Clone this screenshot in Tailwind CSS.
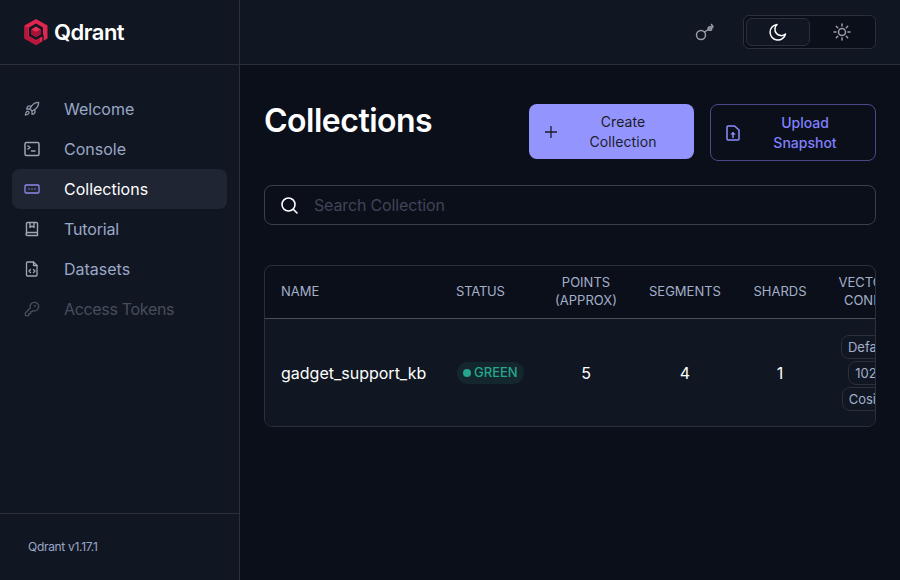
<!DOCTYPE html>
<html lang="en">

<head>
  <script src="https://cdn.jsdelivr.net/npm/@tailwindcss/browser@4"></script>
  <meta charset="UTF-8">
  <title>Qdrant Collections</title>
</head>

<body class="bg-[#0b0f1a] h-[580px] w-[900px] overflow-hidden font-['Inter',sans-serif]">
  <div class="flex h-full">
    <!-- Sidebar -->
    <div class="w-[240px] flex-shrink-0 flex flex-col bg-[#111722] border-r border-[#2a2f3a]">
      <div class="h-[65px] flex-shrink-0 flex items-center pl-6 gap-[6px] border-b border-[#2a2f3a]">
        <svg width="24" height="26" viewBox="0 0 24 26">
          <path d="M12 0 L23.500 6.500 V19.500 L12 26 L0.500 19.500 V6.500 Z" fill="#e0254f" />
          <path d="M0.500 19.500 V6.500 L4.500 9 V17 L12 21.500 L16 19.500 V24 L12 26 Z" fill="#b9163d" />
          <path d="M12 4.500 L19 8.500 V17 L12 21 L5 17 V8.500 Z" fill="#111722" />
          <path d="M19 16 V23.500" stroke="#111722" stroke-width="1.300" />
          <path d="M12 7.500 L16.500 10.200 V15.500 L12 18 L7.500 15.500 V10.200 Z" fill="#ea2d57" />
          <path d="M12 12.800 L16.500 10.200 V15.500 L12 18 L7.500 15.500 V10.200 Z" fill="#a81238" />
        </svg>
        <span class="text-white text-[22px] font-semibold tracking-[-0.5px]">Qdrant</span>
      </div>

      <nav class="flex-1 px-3 pt-6 flex flex-col">
        <a class="h-10 flex items-center pl-[12px] gap-[24px] rounded-lg text-[#9aa8c7] text-base">
          <svg class="w-4 h-4" viewBox="0 0 24 24" fill="none" stroke="#8b92a3" stroke-width="2" stroke-linecap="round" stroke-linejoin="round">
            <path d="M4 16c-1.500 1.300-2 5-2 5s3.700-.5 5-2c.7-.8.7-2.100-.1-2.900a2.200 2.200 0 0 0-2.900-.1z" />
            <path d="M12 15l-3-3a22 22 0 0 1 2-4A12.900 12.900 0 0 1 22 2c0 2.700-.8 7.500-6 11a22 22 0 0 1-4 2z" />
            <path d="M9 12H4s.6-3 2-4c1.600-1.100 5 0 5 0" />
            <path d="M12 15v5s3-.6 4-2c1.100-1.600 0-5 0-5" />
          </svg>
          <span>Welcome</span>
        </a>
        <a class="h-10 flex items-center pl-[12px] gap-[24px] rounded-lg text-[#9aa8c7] text-base">
          <svg class="w-4 h-4" viewBox="0 0 16 16" fill="none" stroke="#a0a6b4" stroke-width="1.500" stroke-linecap="round" stroke-linejoin="round">
            <rect x="1" y="1.500" width="14" height="13" rx="1.500" />
            <path d="M4 5l2 1.500L4 8M7.500 10H11" />
          </svg>
          <span>Console</span>
        </a>
        <a class="h-10 flex items-center pl-[12px] gap-[24px] rounded-lg bg-[#1f2533] text-white text-base">
          <svg class="w-4 h-4" viewBox="0 0 16 16" fill="none" stroke="#8c8cf0" stroke-width="1.300" stroke-linejoin="round">
            <rect x="1" y="4" width="14" height="8" rx="1.200" />
            <path d="M4.500 8h1M7.500 8h1M10.500 8h1" />
          </svg>
          <span>Collections</span>
        </a>
        <a class="h-10 flex items-center pl-[12px] gap-[24px] rounded-lg text-[#9aa8c7] text-base">
          <svg class="w-4 h-4" viewBox="0 0 16 16" fill="none" stroke="#a0a6b4" stroke-width="1.400" stroke-linecap="round" stroke-linejoin="round">
            <path d="M2.500 13V2.500a1 1 0 0 1 1-1h9a1 1 0 0 1 1 1v12h-10a1.500 1.500 0 0 1 0-3h10" />
            <path d="M6 1.500v5l2-1.300 2 1.300v-5" />
          </svg>
          <span class="tracking-[-0.15px]">Tutorial</span>
        </a>
        <a class="h-10 flex items-center pl-[12px] gap-[24px] rounded-lg text-[#9aa8c7] text-base">
          <svg class="w-4 h-4" viewBox="0 0 16 16" fill="none" stroke="#a0a6b4" stroke-width="1.300" stroke-linecap="round" stroke-linejoin="round">
            <path d="M3.500 1h6l3.500 3.500V14a1 1 0 0 1-1 1H3.500a1 1 0 0 1-1-1V2a1 1 0 0 1 1-1z" />
            <path d="M9.500 1v3.500H13M6.500 8.500L5 10l1.500 1.500M9.500 8.500L11 10l-1.500 1.500" />
          </svg>
          <span>Datasets</span>
        </a>
        <a class="h-10 flex items-center pl-[12px] gap-[24px] rounded-lg text-[#474d5c] text-base">
          <svg class="w-4 h-4" viewBox="0 0 24 24" fill="none" stroke="#474d5c" stroke-width="2" stroke-linecap="round" stroke-linejoin="round">
            <path d="M2 18v3c0 .6.4 1 1 1h4v-3h3v-3h2l1.400-1.400a6.500 6.500 0 1 0-4-4z" />
            <circle cx="16.500" cy="7.500" r=".5" />
          </svg>
          <span class="tracking-[-0.32px]">Access Tokens</span>
        </a>
      </nav>

      <div class="h-[67px] flex-shrink-0 border-t border-[#2a2f3a] flex items-center pl-7 text-[#9aa8c7] text-xs tracking-[-0.3px]">Qdrant v1.17.1</div>
    </div>

    <!-- Main Content -->
    <div class="flex-1 min-w-0 flex flex-col">
      <div class="h-[65px] flex-shrink-0 bg-[#111722] border-b border-[#2a2f3a] flex items-center justify-end pr-6">
        <svg class="w-5 h-5 mr-[28px]" viewBox="0 0 20 20" fill="none" stroke="#9a9da6" stroke-width="1.500" stroke-linecap="round">
          <circle cx="6" cy="13" r="4.500" />
          <path d="M9.500 10L17 5" />
          <circle cx="15" cy="6.500" r="1.800" />
          <path d="M16.500 2.500l1.500 2.500" />
        </svg>
        <div class="flex w-[133px] h-[34px] p-[2px] rounded-md bg-[#0b0f1a] border border-[#2a2f3a]">
          <div class="w-[64px] flex items-center justify-center rounded-md bg-[#111722] border border-[#2a2f3a]">
            <svg class="w-5 h-5" viewBox="0 0 20 20" fill="none" stroke="#ffffff" stroke-width="1.500" stroke-linejoin="round">
              <path d="M9 2.500a7.800 7.800 0 1 0 8.500 9.500A6 6 0 0 1 9 2.500z" />
            </svg>
          </div>
          <div class="flex-1 flex items-center justify-center">
            <svg class="w-5 h-5" viewBox="0 0 20 20" fill="none" stroke="#9a9da6" stroke-width="1.500" stroke-linecap="round">
              <circle cx="10" cy="10" r="3.500" />
              <path d="M10 2v2M10 16v2M2 10h2M16 10h2M4.300 4.300l1.400 1.400M14.300 14.300l1.400 1.400M4.300 15.700l1.400-1.400M14.300 5.700l1.400-1.400" />
            </svg>
          </div>
        </div>
      </div>

      <div class="flex-1 min-h-0 px-6">
        <div class="flex items-start justify-between pt-[39px]">
          <h1 class="text-white text-[32px] leading-[32px] pt-[1px] font-semibold tracking-[-0.5px]">Collections</h1>
          <div class="flex gap-4">
            <button class="w-[165px] h-[55px] rounded-lg bg-[#9494ff] text-[#1a1d29] text-sm leading-5 flex items-center pl-4">
              <svg class="w-3 h-3 flex-shrink-0" viewBox="0 0 12 12" stroke="#1a1d29" stroke-width="1.300"><path d="M6 0v12M0 6h12" /></svg>
              <span class="flex-1 text-center pr-[5px] tracking-[0.1px]">Create<br>Collection</span>
            </button>
            <button class="w-[166px] h-[57px] rounded-lg border border-[#4a4a8a] text-[#8080ff] text-sm leading-5 font-medium flex items-center pl-[14px]">
              <svg class="w-4 h-4 flex-shrink-0" viewBox="0 0 16 16" fill="none" stroke="#8f8fff" stroke-width="1.500" stroke-linejoin="round">
                <path d="M3 1h6.500L14 5v9a1 1 0 0 1-1 1H3a1 1 0 0 1-1-1V2a1 1 0 0 1 1-1z" />
                <path d="M8 13V9" />
                <path d="M5.200 9.500L8 6.700l2.800 2.800z" fill="#8f8fff" stroke="none" />
              </svg>
              <span class="flex-1 text-center pr-[6px]">Upload<br>Snapshot</span>
            </button>
          </div>
        </div>

        <div class="mt-6 h-10 rounded-lg border border-[#3a3f4b] flex items-center pl-[14px] gap-[15px]">
          <svg class="w-5 h-5" viewBox="0 0 20 20" fill="none" stroke="#ffffff" stroke-width="1.600" stroke-linecap="round">
            <circle cx="9.500" cy="9.500" r="6.500" />
            <path d="M14.500 14.500L18 18" />
          </svg>
          <span class="text-[#3f4557] text-base tracking-[-0.15px]">Search Collection</span>
        </div>

        <div class="mt-[40px] h-[162px] rounded-lg border border-[#2a2f3a] overflow-hidden">
          <div class="flex h-[53px] pb-[2px] border-b border-[#4a4d55] items-center text-[#a3afc9] text-[13px] leading-[18px] text-center whitespace-nowrap">
            <div class="w-[175px] flex-shrink-0 pl-4 text-left">NAME</div>
            <div class="w-[96px] flex-shrink-0 pl-[16px] text-left tracking-[-0.2px]">STATUS</div>
            <div class="w-[100px] flex-shrink-0">POINTS<br>(APPROX)</div>
            <div class="w-[98px] flex-shrink-0">SEGMENTS</div>
            <div class="w-[92px] flex-shrink-0">SHARDS</div>
            <div class="w-[88px] flex-shrink-0 pr-[2px]">VECTORS<br>CONFIG</div>
          </div>
          <div class="flex h-[108px] bg-[#111722] items-center text-white text-center whitespace-nowrap">
            <div class="w-[175px] flex-shrink-0 pl-4 text-left text-base">gadget_support_kb</div>
            <div class="w-[96px] flex-shrink-0 pl-[17px] flex">
              <span class="flex items-center gap-[3px] h-[22px] px-[6px] rounded-full bg-[#13272c] text-[#26a68f] text-[13px] font-medium">
                <span class="w-2 h-2 rounded-full bg-[#26a68f]"></span>GREEN
              </span>
            </div>
            <div class="w-[100px] flex-shrink-0 text-base">5</div>
            <div class="w-[98px] flex-shrink-0 text-base">4</div>
            <div class="w-[92px] flex-shrink-0 text-base">1</div>
            <div class="flex-shrink-0 w-[88px] flex flex-col items-center gap-[2px] text-[#a3afc9] text-[13px]">
              <span class="h-6 px-[6px] leading-[22px] rounded-lg border border-[#2a2f3a]">Default</span>
              <span class="h-6 px-[6px] leading-[22px] rounded-lg border border-[#2a2f3a]">1024</span>
              <span class="h-6 px-[6px] leading-[22px] rounded-lg border border-[#2a2f3a]">Cosine</span>
            </div>
          </div>
        </div>
      </div>
    </div>
  </div>
</body>

</html>
